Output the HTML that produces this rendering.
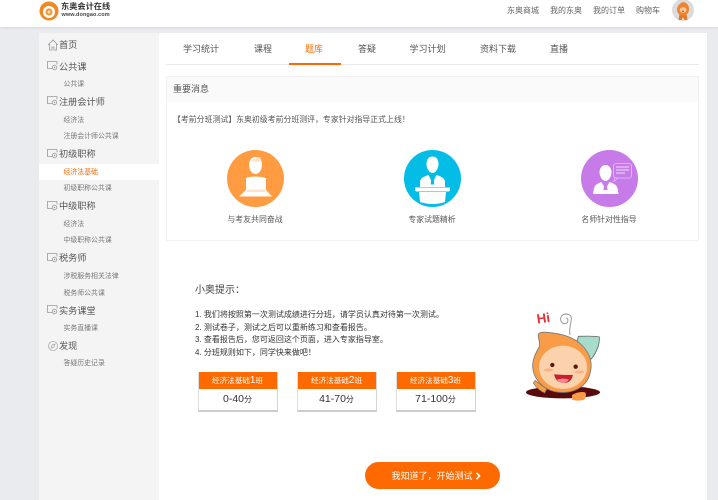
<!DOCTYPE html>
<html lang="zh-CN">
<head>
<meta charset="utf-8">
<title>东奥会计在线</title>
<style>
html,body{margin:0;padding:0;width:718px;height:500px;overflow:hidden;background:#e9ebef;}
body{position:relative;font-family:"Liberation Sans","Noto Sans CJK SC",sans-serif;color:#555;}
.a{position:absolute;}
.t{position:absolute;white-space:nowrap;line-height:14px;height:14px;}
.h{font-size:9.2px;color:#555;left:59px;}
.s{font-size:6.9px;color:#777;left:63.5px;}
.tab{font-size:9px;color:#555;}
.nav{font-size:8px;color:#666;}
.c{text-align:center;}
.li{font-size:8px;color:#333;left:195px;}
.box{position:absolute;top:372px;width:78px;height:38px;background:#fff;border:1px solid #d4d4d4;border-top:0;border-left:1px solid #ddd;border-bottom:2px solid #ccc;}
.box .hd{position:absolute;left:0;top:0;width:78px;height:17px;background:#ff6a00;color:#fff;font-size:7.6px;line-height:17px;text-align:center;white-space:nowrap;}
.box .hd b{font-weight:normal;font-size:10px;}
.box .bd{position:absolute;left:0;top:17px;width:78px;height:21px;line-height:21px;text-align:center;font-size:10.5px;color:#333;white-space:nowrap;}
.box .bd i{font-style:normal;font-size:8px;}
svg{display:block;}
</style>
</head>
<body>
<div class="a" style="left:0;top:0;width:718px;height:27px;background:#fff;box-shadow:0 1px 3px #d5d7db;"></div>

<svg class="a" style="left:39px;top:0" width="20" height="21" viewBox="0 0 20 21">
<circle cx="10" cy="11" r="9.5" fill="#ee8a24"/>
<circle cx="10" cy="12" r="6" fill="#fff"/>
<circle cx="10" cy="12" r="3.6" fill="#f0983c"/>
<circle cx="10" cy="12" r="1.5" fill="#fbe0c2"/>
<path d="M12 0h7v6q-3-4-7-6z" fill="#fff"/>
</svg>
<div class="t" style="left:61px;top:0;font-size:8.2px;font-weight:bold;color:#333;">东奥会计在线</div>
<div class="t" style="left:61.5px;top:7.5px;font-size:5.5px;font-weight:bold;color:#444;letter-spacing:.1px;">www.dongao.com</div>

<div class="t nav" style="left:507px;top:4px;">东奥商城</div>
<div class="t nav" style="left:550px;top:4px;">我的东奥</div>
<div class="t nav" style="left:593px;top:4px;">我的订单</div>
<div class="t nav" style="left:636px;top:4px;">购物车</div>
<svg class="a" style="left:672px;top:0" width="23" height="22" viewBox="0 0 23 22">
<circle cx="11" cy="10" r="11" fill="#dcdcdc"/>
<path d="M7.500 14l-1 6h3l1.500-3 1.500 3h3l-1-6z" fill="#e07a28"/>
<path d="M11 2c4 .5 6 3.500 6 7 0 4-2.500 6.500-6 6.500S5 13 5 9.500C5 6 7.500 3.500 11 2z" fill="#ee8430"/>
<ellipse cx="11" cy="10" rx="3.300" ry="2.800" fill="#fbc89a"/>
<path d="M9.800 10.800h2.400q-.4 1.300-1.200 1.300t-1.200-1.300z" fill="#d8402f"/>
</svg>

<!-- sidebar -->
<div class="a" style="left:39px;top:33px;width:120px;height:467px;background:#f4f4f4;"></div>
<div class="a" style="left:39px;top:164px;width:120px;height:16px;background:#fff;"></div>

<!-- main -->
<div class="a" style="left:159px;top:33px;width:548px;height:467px;background:#fff;"></div>

<svg class="a" style="left:47px;top:39px" width="12" height="12" viewBox="0 0 12 12" fill="none" stroke="#999" stroke-width=".8">
<path d="M1 6l5-5 5 5M2.500 5v6h2.500V8h2v3h2.500V5"/>
</svg>
<svg class="a" style="left:47px;top:61px" width="11" height="10" viewBox="0 0 11 10" fill="none" stroke="#999" stroke-width=".8"><path d="M6 7.500H.5v-7h9.500v3"/><circle cx="7.500" cy="6.500" r="2.300" fill="#f4f4f4"/><circle cx="7.500" cy="6.500" r=".8" fill="#999" stroke="none"/></svg>
<svg class="a" style="left:47px;top:96px" width="11" height="10" viewBox="0 0 11 10" fill="none" stroke="#999" stroke-width=".8"><path d="M6 7.500H.5v-7h9.500v3"/><circle cx="7.500" cy="6.500" r="2.300" fill="#f4f4f4"/><circle cx="7.500" cy="6.500" r=".8" fill="#999" stroke="none"/></svg>
<svg class="a" style="left:47px;top:149px" width="11" height="10" viewBox="0 0 11 10" fill="none" stroke="#999" stroke-width=".8"><path d="M6 7.500H.5v-7h9.500v3"/><circle cx="7.500" cy="6.500" r="2.300" fill="#f4f4f4"/><circle cx="7.500" cy="6.500" r=".8" fill="#999" stroke="none"/></svg>
<svg class="a" style="left:47px;top:201px" width="11" height="10" viewBox="0 0 11 10" fill="none" stroke="#999" stroke-width=".8"><path d="M6 7.500H.5v-7h9.500v3"/><circle cx="7.500" cy="6.500" r="2.300" fill="#f4f4f4"/><circle cx="7.500" cy="6.500" r=".8" fill="#999" stroke="none"/></svg>
<svg class="a" style="left:47px;top:253px" width="11" height="10" viewBox="0 0 11 10" fill="none" stroke="#999" stroke-width=".8"><path d="M6 7.500H.5v-7h9.500v3"/><circle cx="7.500" cy="6.500" r="2.300" fill="#f4f4f4"/><circle cx="7.500" cy="6.500" r=".8" fill="#999" stroke="none"/></svg>
<svg class="a" style="left:47px;top:305px" width="11" height="10" viewBox="0 0 11 10" fill="none" stroke="#999" stroke-width=".8"><path d="M6 7.500H.5v-7h9.500v3"/><circle cx="7.500" cy="6.500" r="2.300" fill="#f4f4f4"/><circle cx="7.500" cy="6.500" r=".8" fill="#999" stroke="none"/></svg>
<svg class="a" style="left:47px;top:340px" width="12" height="12" viewBox="0 0 12 12" fill="none" stroke="#aaa" stroke-width=".8"><circle cx="6" cy="6" r="4.600"/><path d="M8 4L5 5 4 8l3-1z"/></svg>

<div class="t h" style="top:38px;">首页</div>
<div class="t h" style="top:60px;">公共课</div>
<div class="t s" style="top:78px;">公共课</div>
<div class="t h" style="top:95px;">注册会计师</div>
<div class="t s" style="top:113.500px;">经济法</div>
<div class="t s" style="top:130px;">注册会计师公共课</div>
<div class="t h" style="top:147px;">初级职称</div>
<div class="t s" style="top:165.500px;color:#ff6a00;">经济法基础</div>
<div class="t s" style="top:182px;">初级职称公共课</div>
<div class="t h" style="top:199px;">中级职称</div>
<div class="t s" style="top:217.500px;">经济法</div>
<div class="t s" style="top:234px;">中级职称公共课</div>
<div class="t h" style="top:251px;">税务师</div>
<div class="t s" style="top:269.500px;">涉税服务相关法律</div>
<div class="t s" style="top:286.500px;">税务师公共课</div>
<div class="t h" style="top:304px;">实务课堂</div>
<div class="t s" style="top:321.500px;">实务直播课</div>
<div class="t h" style="top:339px;">发现</div>
<div class="t s" style="top:356.500px;">答疑历史记录</div>

<!-- tabs -->
<div class="a" style="left:166px;top:64px;width:533px;height:1px;background:#eaeaea;"></div>
<div class="a" style="left:289px;top:63px;width:52px;height:2px;background:#ff6a00;"></div>
<div class="t tab" style="left:183px;top:42px;">学习统计</div>
<div class="t tab" style="left:254px;top:42px;">课程</div>
<div class="t tab" style="left:305px;top:42px;color:#ff6a00;">题库</div>
<div class="t tab" style="left:358px;top:42px;">答疑</div>
<div class="t tab" style="left:409.500px;top:42px;">学习计划</div>
<div class="t tab" style="left:480px;top:42px;">资料下载</div>
<div class="t tab" style="left:550px;top:42px;">直播</div>

<!-- panel -->
<div class="a" style="left:166px;top:76px;width:531px;height:163px;border:1px solid #f1f1f1;"></div>
<div class="a" style="left:167px;top:77px;width:531px;height:25px;background:#fafafa;"></div>
<div class="t" style="left:173px;top:82px;font-size:9px;color:#555;">重要消息</div>
<div class="t" style="left:173px;top:113px;font-size:7.900px;color:#555;">【考前分班测试】东奥初级考前分班测评，专家针对指导正式上线！</div>

<svg class="a" style="left:227px;top:150px" width="57" height="57" viewBox="0 0 57 57">
<circle cx="28.500" cy="28.500" r="28.500" fill="#ff9c42"/>
<path d="M22 15c0-5 3-8 6.500-8s6.500 3 6.500 8c0 4-2.500 9-6.500 9S22 19 22 15z" fill="#fff"/>
<path d="M22 11l11-4 2 5z" fill="#fde3cb"/>
<path d="M19 28q9.500-3 20 0v12l6 6.500H12l7-6.500z" fill="#fff"/>
<path d="M20 39.500h18v2.500H20z" fill="#fde3cb"/>
</svg>
<svg class="a" style="left:404px;top:150px" width="57" height="57" viewBox="0 0 57 57">
<circle cx="28.500" cy="28.500" r="28.500" fill="#03bde6"/>
<path d="M22.500 14c0-5 2.500-7.500 6-7.500s6 2.500 6 7.500c0 4-2.500 9-6 9s-6-5-6-9z" fill="#fff"/>
<path d="M16 37v-6q1-4 8.500-6l4 8 4-8q7.500 2 8.500 6v6z" fill="#fff"/>
<path d="M27.700 26.500h1.600l1 8h-3.600z" fill="#03bde6"/>
<path d="M11 37.500h35v3.500H11z" fill="#fff"/>
<path d="M15 42h27l-1 10q-12 4-25 0z" fill="#fff"/>
<path d="M12 41.200h33v.8H12z" fill="#9ce3f4"/>
</svg>
<svg class="a" style="left:581px;top:150px" width="57" height="57" viewBox="0 0 57 57">
<circle cx="28.500" cy="28.500" r="28.500" fill="#c77be8"/>
<path d="M18.500 22c0-4 3-7 6-7s6 3 6 7c0 4-2.500 9-6 9s-6-5-6-9z" fill="#fff"/>
<path d="M12 44l1-6q1-4 7.500-6l4 7 4-7q7 2 8 6l1 6z" fill="#fff"/>
<path d="M23.500 32h2l1 8h-4z" fill="#c77be8"/>
<rect x="32.500" y="13.500" width="18" height="14.500" rx="2.500" fill="none" stroke="#e5c3f4" stroke-width=".8"/>
<path d="M34 28l-1.500 4 4.500-4z" fill="#c77be8" stroke="#e5c3f4" stroke-width=".6"/>
<path d="M35 17h13M35 20h13M35 23h9" stroke="#efdcf8" stroke-width="1"/>
</svg>

<div class="t c" style="left:205px;top:213px;width:100px;font-size:7.900px;color:#555;">与考友共同奋战</div>
<div class="t c" style="left:382px;top:213px;width:100px;font-size:7.900px;color:#555;">专家试题精析</div>
<div class="t c" style="left:559px;top:213px;width:100px;font-size:7.900px;color:#555;">名师针对性指导</div>

<!-- tips -->
<div class="t" style="left:195px;top:283.500px;font-size:10px;color:#444;">小奥提示：</div>
<div class="t li" style="top:308px;">1. 我们将按照第一次测试成绩进行分班，请学员认真对待第一次测试。</div>
<div class="t li" style="top:320.500px;">2. 测试卷子，测试之后可以重新练习和查看报告。</div>
<div class="t li" style="top:332.500px;">3. 查看报告后，您可返回这个页面，进入专家指导室。</div>
<div class="t li" style="top:345.500px;">4. 分班规则如下，同学快来做吧！</div>

<div class="box" style="left:197.500px;"><div class="hd">经济法基础<b>1</b>班</div><div class="bd">0-40<i>分</i></div></div>
<div class="box" style="left:296.500px;"><div class="hd">经济法基础<b>2</b>班</div><div class="bd">41-70<i>分</i></div></div>
<div class="box" style="left:395.500px;"><div class="hd">经济法基础<b>3</b>班</div><div class="bd">71-100<i>分</i></div></div>

<!-- mascot -->
<svg class="a" style="left:510px;top:295px" width="110" height="115" viewBox="0 0 330 345">
<ellipse cx="159" cy="292" rx="111" ry="18" fill="#5a0a0a"/>
<path d="M205 124q50-2 63 2 2 32-24 66l-50-20z" fill="#a5dccb" stroke="#666" stroke-width="2.500"/>
<path d="M180 120c-4-20 4-35 4-50 0-12-18-18-28-8-8 8-4 24 8 24 10 0 14-14 4-18" fill="none" stroke="#999" stroke-width="3"/>
<path d="M85 118Q90 110 110 112C150 115 190 125 215 150C245 180 250 215 235 250C220 280 185 295 150 292C105 290 70 255 68 215C67 190 80 170 88 155C92 140 82 128 85 118Z" fill="#f89c47" stroke="#777" stroke-width="2.500"/>
<ellipse cx="159" cy="217" rx="72" ry="65" fill="#fbd2ab"/>
<circle cx="127" cy="210" r="6.500" fill="#5a1515"/>
<circle cx="197" cy="215" r="6.500" fill="#5a1515"/>
<ellipse cx="115" cy="225" rx="14" ry="5" fill="#f6b48c"/>
<ellipse cx="209" cy="231" rx="14" ry="5" fill="#f6b48c"/>
<path d="M132 238q28 2 57 2-6 25-29 24-22-1-28-26z" fill="#c8202c"/>
<path d="M141 254q18-6 36 0-8 10-18 10-12 0-18-10z" fill="#f58a94"/>
<path d="M70 264l6-8q16 14 34 26l-6 12q-22-10-34-30z" fill="#f89c47" stroke="#777" stroke-width="2"/>
<path d="M186 300q20-12 40-8 5 12-3 22-20 6-37 0z" fill="#f89c47"/>
<text x="82" y="86" transform="rotate(-8 82 86)" font-family="'Liberation Sans',sans-serif" font-size="40" font-weight="bold" fill="#e2323a">Hi</text>
</svg>

<!-- button -->
<div class="a" style="left:365px;top:462px;width:135px;height:27px;border-radius:13.500px;background:#ff6a00;"></div>
<div class="t" style="left:391.500px;top:468.500px;font-size:9px;color:#fff;">我知道了，开始测试</div>
<svg class="a" style="left:475px;top:472px" width="6" height="8" viewBox="0 0 6 8"><path d="M1.500 .8L4.500 4 1.500 7.200" fill="none" stroke="#fff" stroke-width="1.600"/></svg>
</body>
</html>
